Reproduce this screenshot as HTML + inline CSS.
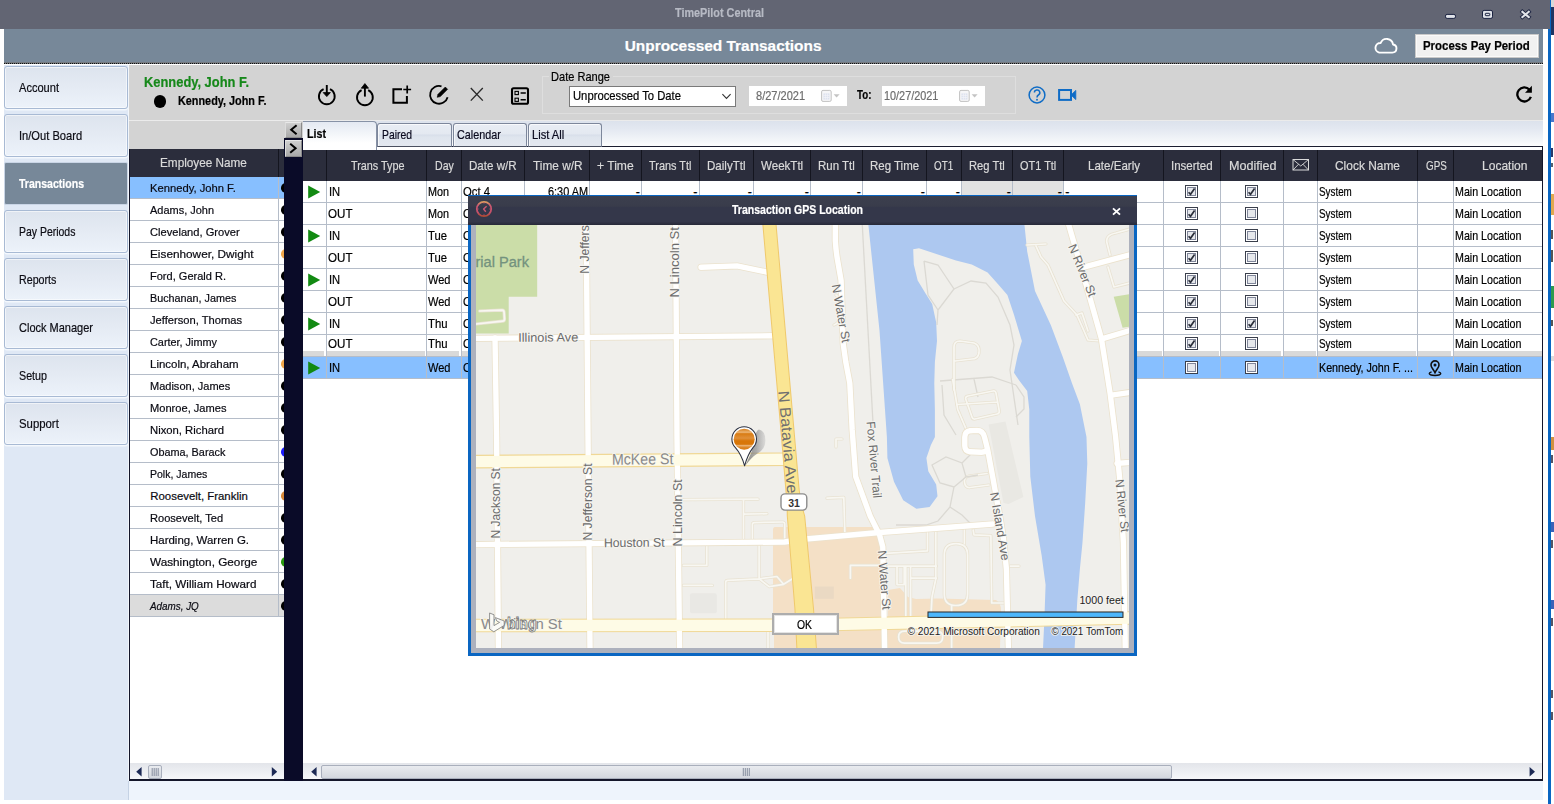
<!DOCTYPE html>
<html lang="en"><head><meta charset="utf-8"><title>TimePilot Central</title>
<style>
html,body{margin:0;padding:0;}
body{width:1554px;height:804px;overflow:hidden;background:#fff;position:relative;font-family:"Liberation Sans",sans-serif;}
.a{position:absolute;}
.t{position:absolute;white-space:pre;line-height:1;transform-origin:0 0;-webkit-text-stroke:.2px;font-family:"Liberation Sans",sans-serif;}
#titlebar{left:0;top:0;width:1550px;height:28.5px;background:#626573;}
#subhdr{left:4px;top:28.5px;width:1539px;height:34.5px;background:#778899;}
#subline{left:4px;top:62px;width:1539px;height:1.4px;background:#767b80;border-bottom:1.3px dotted #111;}
#sidebar{left:4px;top:65px;width:125px;height:735px;background:#dfe8f5;border-right:1px solid #f2f6fb;box-sizing:border-box}
.nav{position:absolute;left:4.3px;width:123.6px;height:43.6px;box-sizing:border-box;border:1px solid #a8bad4;border-radius:3px;
  background:linear-gradient(#dde4ee 0%,#e4eaf3 45%,#ecf2fa 100%);box-shadow:inset 0 0 0 1px rgba(255,255,255,.55), 0 1.5px 0 #f4f8fd;}
.nav.sel{background:#778899;border-color:#c9d5e6;box-shadow:none;border-radius:2px;}
#toolbar{left:128.5px;top:65px;width:1414.5px;height:55px;background:#d3d3d3;}
#tbline{left:128.5px;top:119.6px;width:1414.5px;height:1.4px;background:#ebebeb;}
#strip{left:128.5px;top:121px;width:175px;height:28.5px;background:#d3d3d3;}
#bottom{left:128px;top:781px;width:1415px;height:19px;background:#eef4fc;border-left:1px solid #c5d2e4;box-sizing:border-box;}

#emp{left:128.5px;top:149px;width:156px;height:632px;background:#fff;border-left:1.5px solid #14162a;border-bottom:2px solid #14162a;box-sizing:border-box;overflow:hidden;}
#emphdr{left:130px;top:149px;width:154.5px;height:28px;background:#2b2d3c;}
.erow{position:absolute;left:130px;width:154.5px;height:22px;box-sizing:border-box;border-bottom:1px solid #b5bdc9;background:#fff;}
.dot{position:absolute;left:281px;width:9.6px;height:9.6px;border-radius:50%;}
#split{left:284.3px;top:138px;width:18.6px;height:643px;background:#0a0b28;}
.sbtn{position:absolute;left:285.3px;width:16.6px;height:16.4px;box-sizing:border-box;background:linear-gradient(#cfcfcf,#a9a9a9);border:1px solid #8a8a8a;border-top-color:#e8e8e8;border-left-color:#dcdcdc;}
#tabstrip{left:303px;top:121px;width:1240px;height:26px;background:linear-gradient(#dce2ec 0%,#e3e8f1 30%,#f1f4f8 70%,#fff 100%);}
.tab{position:absolute;top:123.2px;height:24px;width:74.4px;box-sizing:border-box;border:1px solid #7d879b;border-bottom:1px solid #4a5060;border-radius:3px 3px 0 0;
  background:linear-gradient(#e9edf4 0%,#e4e9f1 45%,#d8dfea 50%,#dfe5ee 60%,#e3e8f0 100%);box-shadow:inset 1px 1px 0 rgba(255,255,255,.7);}
#tabactive{left:303px;top:121.2px;width:73.6px;height:29px;box-sizing:border-box;border:1px solid #8792a6;border-bottom:none;border-left:none;border-radius:0 4px 0 0;
  background:linear-gradient(#e4e9f2 0%,#f2f5f9 40%,#fff 75%);}
#grid{left:303px;top:146px;width:1240px;height:635px;background:#fff;box-sizing:border-box;border-top:1px solid #1c1e30;border-right:1.2px solid #14162a;border-bottom:2px solid #14162a;}
#ghdr{left:303px;top:150.3px;width:1239.3px;height:30.7px;background:#2b2d3c;}
.hsep{position:absolute;top:150.3px;width:1px;height:30.7px;background:#14151f;}
.vl{position:absolute;width:1px;background:#b5bdc9;}
.hl{position:absolute;left:303px;width:1239px;height:1px;background:#b5bdc9;}
.sb{position:absolute;height:16px;top:763px;background:linear-gradient(#e3e5ea 0%,#eceef2 50%,#f6f7f9 100%);}
.thumb{position:absolute;box-sizing:border-box;border:1px solid #a9afbc;border-radius:2px;background:linear-gradient(#e9ebef,#d3d7de);}
.cb{position:absolute;width:13px;height:13px;box-sizing:border-box;border:1.2px solid #3a3f4c;background:#fff;box-shadow:inset 0 0 0 1px #fff, inset 0 0 0 2px #80869a;}
.cbi{position:absolute;left:1.9px;top:1.9px;width:6.8px;height:6.8px;background:#e6e8ec;}

#dlg,#dlgin,#dlgtitle,#map,#okbtn,.dz{z-index:5;}

#dlg{left:468.2px;top:195px;width:668.8px;height:461px;background:#0a66c2;}
#dlgin{left:471px;top:225px;width:663.2px;height:427.8px;background:#adb1bd;}
#dlgtitle{left:468.2px;top:196px;width:668.8px;height:29px;background:linear-gradient(#3c3f4e 0%,#393c4b 35%,#34374a 40%,#34374a 88%,#272938 100%);}
#map{left:476px;top:225.4px;width:653.2px;height:422.8px;overflow:hidden;background:#f0efeb;}
#okbtn{left:772.2px;top:613.4px;width:66.8px;height:22px;box-sizing:border-box;background:#fff;border:2px solid #adadad;box-shadow:inset 0 0 0 1px #e4e4e4;}
.ml{font-family:"Liberation Sans",sans-serif;}
</style></head>
<body>
<div class="a" id="titlebar"></div>
<div class="a" id="subhdr"></div>
<div class="a" id="subline"></div>
<div class="a" style="left:1548px;top:28.5px;width:3px;height:775.5px;background:#0a66c2"></div>
<div class="a" style="left:1550px;top:0;width:1px;height:29px;background:#0a66c2"></div>
<div class="a" style="left:1551px;top:0;width:3px;height:7px;background:#d8d8d8"></div>
<div class="a" style="left:1551px;top:7px;width:3px;height:28px;background:#1f3563"></div>
<div class="a" style="left:1551px;top:113px;width:3px;height:9px;background:#4a78cc"></div>
<div class="a" style="left:1551px;top:148px;width:2px;height:9px;background:#2a3a6a"></div>
<div class="a" style="left:1551px;top:163px;width:2px;height:4px;background:#55606e"></div>
<div class="a" style="left:1551px;top:194px;width:3px;height:21px;background:#e0a850"></div>
<div class="a" style="left:1551px;top:230px;width:2px;height:9px;background:#555"></div>
<div class="a" style="left:1551px;top:250px;width:2px;height:12px;background:#555"></div>
<div class="a" style="left:1551px;top:286px;width:3px;height:22px;background:#2e9a4e"></div>
<div class="a" style="left:1551px;top:320px;width:2px;height:6px;background:#555"></div>
<div class="a" style="left:1551px;top:356px;width:3px;height:5px;background:#dcdcdc"></div>
<div class="a" style="left:1551px;top:437px;width:3px;height:13px;background:#d09040"></div>
<div class="a" style="left:1551px;top:455px;width:2px;height:8px;background:#556"></div>
<div class="a" style="left:1551px;top:522px;width:3px;height:10px;background:#3a62b8"></div>
<div class="a" style="left:1551px;top:540px;width:2px;height:8px;background:#556"></div>
<div class="a" style="left:1551px;top:600px;width:3px;height:9px;background:#3a62b8"></div>
<div class="a" style="left:1551px;top:618px;width:2px;height:8px;background:#556"></div>
<div class="a" style="left:1551px;top:690px;width:2px;height:8px;background:#556"></div>
<div class="a" style="left:1551px;top:712px;width:2px;height:8px;background:#556"></div>
<svg class="a" style="left:1440px;top:6px" width="100" height="18" viewBox="1440 6 100 18">
<rect x="1445.5" y="14.4" width="10" height="4" rx="1.6" fill="#e0e3e9" stroke="#1a2240" stroke-width="1"/>
<rect x="1482.5" y="10.4" width="10" height="8" rx="1.6" fill="#e0e3e9" stroke="#1a2240" stroke-width="1"/>
<rect x="1485.3" y="13.3" width="4.5" height="2.4" rx=".6" fill="#e0e3e9" stroke="#1a2240" stroke-width="1"/>
<path d="M1522.4 11.8 L1528.8 17.1 M1528.8 11.8 L1522.4 17.1" stroke="#1a2240" stroke-width="3.8" stroke-linecap="square"/>
<path d="M1522.4 11.8 L1528.8 17.1 M1528.8 11.8 L1522.4 17.1" stroke="#e0e3e9" stroke-width="2.1" stroke-linecap="square"/>
</svg>
<svg class="a" style="left:1370px;top:34px" width="32" height="24" viewBox="1370 34 32 24">
<path d="M1379.2 52.6 h13.2 a4.1 4.1 0 0 0 .6 -8.15 a6.4 6.4 0 0 0 -12.3 -1.5 a4.9 4.9 0 0 0 -1.5 9.65 z" fill="none" stroke="#fff" stroke-width="1.9" stroke-linejoin="round"/>
</svg>
<div class="a" style="left:1415px;top:34.2px;width:123.7px;height:23.4px;box-sizing:border-box;background:#f1f1f1;border:1.5px solid #c9c9c9;box-shadow:inset 0 0 0 1px #fafafa"></div>
<div class="a" id="sidebar"></div>
<div class="nav" style="top:65.5px"></div>
<div class="nav" style="top:113.5px"></div>
<div class="nav sel" style="top:161.5px"></div>
<div class="nav" style="top:209.5px"></div>
<div class="nav" style="top:257.5px"></div>
<div class="nav" style="top:305.5px"></div>
<div class="nav" style="top:353.5px"></div>
<div class="nav" style="top:401.5px"></div>
<div class="a" id="toolbar"></div>
<div class="a" id="tbline"></div>
<div class="a" id="strip"></div>
<div class="a" id="bottom"></div>
<div class="a" style="left:153.6px;top:95.3px;width:12.4px;height:12.4px;border-radius:50%;background:#000"></div>
<svg class="a" style="left:310px;top:78px" width="230" height="34" viewBox="310 78 230 34">
<g fill="none" stroke="#000" stroke-width="1.9" stroke-linecap="butt">
 <!-- clock in -->
 <path d="M323.6 89.2 A7.9 7.9 0 1 0 330.0 89.2"/>
 <path d="M326.8 85 V95"/>
 <path d="M323.2 92.6 L326.8 96.6 L330.4 92.6 Z" fill="#000" stroke-width=".8"/>
 <!-- clock out -->
 <path d="M361.6 90.2 A7.9 7.9 0 1 0 368.2 90.2"/>
 <path d="M364.9 86 V96.6"/>
 <path d="M361.3 88.2 L364.9 83.6 L368.5 88.2 Z" fill="#000" stroke-width=".8"/>
 <!-- new -->
 <path d="M402 89.2 H393.4 V102.7 H406.9 V96" stroke-width="2"/>
 <path d="M407.2 85.6 V93.4 M403.3 89.5 H411.1" stroke-width="1.7"/>
 <!-- edit circle -->
 <path d="M441.5 86.3 A8.9 8.9 0 1 0 447.6 97.2" stroke-width="1.8"/>
 <path d="M437.2 97.3 L438 94.3 L445.3 87 L447.6 89.3 L440.3 96.6 Z" fill="#000" stroke-width=".6"/>
 <!-- delete X -->
 <path d="M470.8 88 L482.8 100.6 M482.8 88 L470.8 100.6" stroke="#2a2a2a" stroke-width="1.35"/>
 <!-- list -->
 <rect x="512" y="88.2" width="16" height="15.6" rx="1.6" stroke-width="2.1"/>
 <rect x="515" y="91.4" width="3.4" height="3.2" stroke-width="1.1"/>
 <rect x="515" y="98.2" width="3.4" height="3.2" stroke-width="1.1"/>
 <path d="M520.6 92.9 H525.8 M520.6 99.8 H525.8" stroke-width="1.5"/>
</g></svg>
<div class="a" style="left:542.2px;top:76.4px;width:473.5px;height:38px;box-sizing:border-box;border:1px solid #dedede"></div>
<div class="a" style="left:549px;top:72px;width:64px;height:10px;background:#d3d3d3"></div>
<div class="a" style="left:569px;top:86.2px;width:166.7px;height:20.6px;box-sizing:border-box;background:#fff;border:1px solid #7a7a7a"></div>
<svg class="a" style="left:720px;top:90px" width="14" height="12" viewBox="720 90 14 12"><path d="M722.4 94.2 L726.5 98.4 L730.6 94.2" fill="none" stroke="#333" stroke-width="1.1"/></svg>
<div class="a" style="left:748.8px;top:85.8px;width:98.2px;height:20.2px;background:#fff"></div>
<div class="a" style="left:881.8px;top:85.8px;width:103.2px;height:20.2px;background:#fff"></div>
<svg class="a" style="left:820px;top:88px" width="24" height="16" viewBox="-1 0 24 16">
<rect x=".6" y="2.4" width="9.6" height="11" rx="1.4" fill="#f6f6f8" stroke="#c2c2c2"/>
<rect x="2.4" y="5.4" width="6" height="6.2" fill="#dde2ee"/><path d="M2.4 7.4h6M2.4 9.5h6M4.4 5.4v6.2M6.4 5.4v6.2" stroke="#f4f5f9" stroke-width=".7"/>
<path d="M12.6 6.2 h6 l-3 3.4 z" fill="#c4c4c4"/>
</svg>
<svg class="a" style="left:958.2px;top:88px" width="24" height="16" viewBox="-1 0 24 16">
<rect x=".6" y="2.4" width="9.6" height="11" rx="1.4" fill="#f6f6f8" stroke="#c2c2c2"/>
<rect x="2.4" y="5.4" width="6" height="6.2" fill="#dde2ee"/><path d="M2.4 7.4h6M2.4 9.5h6M4.4 5.4v6.2M6.4 5.4v6.2" stroke="#f4f5f9" stroke-width=".7"/>
<path d="M12.6 6.2 h6 l-3 3.4 z" fill="#c4c4c4"/>
</svg>
<svg class="a" style="left:1026px;top:84px" width="54" height="22" viewBox="1026 84 54 22">
<circle cx="1037" cy="95" r="7.9" fill="none" stroke="#0f6cc6" stroke-width="1.5"/>
<path d="M1034.4 92.6 a2.7 2.7 0 1 1 4 2.4 c-1.1 .7 -1.4 1.1 -1.4 2.4" fill="none" stroke="#0f6cc6" stroke-width="1.5"/>
<circle cx="1037" cy="99.7" r=".95" fill="#0f6cc6"/>
<rect x="1059.1" y="90" width="11.9" height="9.9" fill="none" stroke="#0f6cc6" stroke-width="2"/>
<path d="M1071 95 L1075.8 90.4 V99.6 Z" fill="#0f6cc6" stroke="#0f6cc6" stroke-width=".8"/>
</svg>
<svg class="a" style="left:1512px;top:82px" width="24" height="24" viewBox="1512 82 24 24">
<path d="M1529.4 89.6 A7 7 0 1 0 1530.9 96.9" fill="none" stroke="#000" stroke-width="2.3"/>
<path d="M1531.9 85.8 V92.8 H1525 Z" fill="#000"/>
</svg>
<div class="a" id="emp"></div>
<div class="erow" style="top:177px;background:#87bfff"></div>
<div class="dot" style="top:183.2px;background:#000"></div>
<div class="erow" style="top:199px;background:#fff"></div>
<div class="dot" style="top:205.2px;background:#000"></div>
<div class="erow" style="top:221px;background:#fff"></div>
<div class="dot" style="top:227.2px;background:#000"></div>
<div class="erow" style="top:243px;background:#fff"></div>
<div class="dot" style="top:249.2px;background:#f0a64a"></div>
<div class="erow" style="top:265px;background:#fff"></div>
<div class="dot" style="top:271.2px;background:#000"></div>
<div class="erow" style="top:287px;background:#fff"></div>
<div class="dot" style="top:293.2px;background:#000"></div>
<div class="erow" style="top:309px;background:#fff"></div>
<div class="dot" style="top:315.2px;background:#000"></div>
<div class="erow" style="top:331px;background:#fff"></div>
<div class="dot" style="top:337.2px;background:#000"></div>
<div class="erow" style="top:353px;background:#fff"></div>
<div class="dot" style="top:359.2px;background:#f0a64a"></div>
<div class="erow" style="top:375px;background:#fff"></div>
<div class="dot" style="top:381.2px;background:#000"></div>
<div class="erow" style="top:397px;background:#fff"></div>
<div class="dot" style="top:403.2px;background:#000"></div>
<div class="erow" style="top:419px;background:#fff"></div>
<div class="dot" style="top:425.2px;background:#000"></div>
<div class="erow" style="top:441px;background:#fff"></div>
<div class="dot" style="top:447.2px;background:#1a1aff"></div>
<div class="erow" style="top:463px;background:#fff"></div>
<div class="dot" style="top:469.2px;background:#000"></div>
<div class="erow" style="top:485px;background:#fff"></div>
<div class="dot" style="top:491.2px;background:#d98a3a"></div>
<div class="erow" style="top:507px;background:#fff"></div>
<div class="dot" style="top:513.2px;background:#000"></div>
<div class="erow" style="top:529px;background:#fff"></div>
<div class="dot" style="top:535.2px;background:#000"></div>
<div class="erow" style="top:551px;background:#fff"></div>
<div class="dot" style="top:557.2px;background:#2a9a10"></div>
<div class="erow" style="top:573px;background:#fff"></div>
<div class="dot" style="top:579.2px;background:#000"></div>
<div class="erow" style="top:595px;background:#dcdcdc"></div>
<div class="dot" style="top:601.2px;background:#000"></div>
<div class="a" style="left:277.6px;top:177px;width:1px;height:440px;background:#b5bdc9"></div>
<div class="a" id="emphdr"></div>
<div class="a" style="left:277.6px;top:149px;width:1px;height:28px;background:#14151f"></div>
<div class="sb" style="left:130px;width:154.5px"></div>
<div class="thumb" style="left:148.4px;top:764.6px;width:13.4px;height:14px"></div>
<svg class="a" style="left:130px;top:763px" width="155" height="17" viewBox="130 763 155 17">
<path d="M141.6 767 V776.4 L136.2 771.7 Z M271.8 767 V776.4 L277.2 771.7 Z" fill="#1d2a55"/>
<path d="M152.2 768 V776 M154.2 768 V776 M156.2 768 V776 M158.2 768 V776" stroke="#7d8698" stroke-width=".9"/></svg>
<div class="a" id="split"></div>
<div class="sbtn" style="top:121.6px"></div><div class="sbtn" style="top:140.3px"></div>
<svg class="a" style="left:285px;top:121px" width="18" height="37" viewBox="285 121 18 37">
<path d="M296.6 125.2 L291.2 129.7 L296.6 134.2" fill="none" stroke="#000" stroke-width="2"/>
<path d="M290.2 143.8 L295.6 148.3 L290.2 152.8" fill="none" stroke="#000" stroke-width="2"/></svg>
<div class="a" id="tabstrip"></div>
<div class="a" id="grid"></div>
<div class="tab" style="left:377.4px"></div>
<div class="tab" style="left:452.9px"></div>
<div class="tab" style="left:527.9px"></div>
<div class="a" id="tabactive"></div>
<div class="hl" style="top:202px"></div>
<svg class="a" style="left:307px;top:183.9px" width="15" height="16" viewBox="0 0 15 16"><path d="M1.2 1.4 L13.2 8 L1.2 14.6 Z" fill="#128a12"/></svg>
<div class="cb" style="left:1185.0px;top:185.0px"><div class="cbi"></div><svg style="position:absolute;left:1px;top:1px" width="9" height="9" viewBox="0 0 9 9"><path d="M1.6 5.2 L3.5 7.3 L7.6 1.6" fill="none" stroke="#2a2e3a" stroke-width="1.7"/></svg></div>
<div class="cb" style="left:1245.1px;top:185.0px"><div class="cbi"></div><svg style="position:absolute;left:1px;top:1px" width="9" height="9" viewBox="0 0 9 9"><path d="M1.6 5.2 L3.5 7.3 L7.6 1.6" fill="none" stroke="#2a2e3a" stroke-width="1.7"/></svg></div>
<div class="hl" style="top:224px"></div>
<div class="cb" style="left:1185.0px;top:207.0px"><div class="cbi"></div><svg style="position:absolute;left:1px;top:1px" width="9" height="9" viewBox="0 0 9 9"><path d="M1.6 5.2 L3.5 7.3 L7.6 1.6" fill="none" stroke="#2a2e3a" stroke-width="1.7"/></svg></div>
<div class="cb" style="left:1245.1px;top:207.0px"><div class="cbi"></div></div>
<div class="hl" style="top:246px"></div>
<svg class="a" style="left:307px;top:227.9px" width="15" height="16" viewBox="0 0 15 16"><path d="M1.2 1.4 L13.2 8 L1.2 14.6 Z" fill="#128a12"/></svg>
<div class="cb" style="left:1185.0px;top:229.0px"><div class="cbi"></div><svg style="position:absolute;left:1px;top:1px" width="9" height="9" viewBox="0 0 9 9"><path d="M1.6 5.2 L3.5 7.3 L7.6 1.6" fill="none" stroke="#2a2e3a" stroke-width="1.7"/></svg></div>
<div class="cb" style="left:1245.1px;top:229.0px"><div class="cbi"></div></div>
<div class="hl" style="top:268px"></div>
<div class="cb" style="left:1185.0px;top:251.0px"><div class="cbi"></div><svg style="position:absolute;left:1px;top:1px" width="9" height="9" viewBox="0 0 9 9"><path d="M1.6 5.2 L3.5 7.3 L7.6 1.6" fill="none" stroke="#2a2e3a" stroke-width="1.7"/></svg></div>
<div class="cb" style="left:1245.1px;top:251.0px"><div class="cbi"></div></div>
<div class="hl" style="top:290px"></div>
<svg class="a" style="left:307px;top:271.9px" width="15" height="16" viewBox="0 0 15 16"><path d="M1.2 1.4 L13.2 8 L1.2 14.6 Z" fill="#128a12"/></svg>
<div class="cb" style="left:1185.0px;top:273.0px"><div class="cbi"></div><svg style="position:absolute;left:1px;top:1px" width="9" height="9" viewBox="0 0 9 9"><path d="M1.6 5.2 L3.5 7.3 L7.6 1.6" fill="none" stroke="#2a2e3a" stroke-width="1.7"/></svg></div>
<div class="cb" style="left:1245.1px;top:273.0px"><div class="cbi"></div></div>
<div class="hl" style="top:312px"></div>
<div class="cb" style="left:1185.0px;top:295.0px"><div class="cbi"></div><svg style="position:absolute;left:1px;top:1px" width="9" height="9" viewBox="0 0 9 9"><path d="M1.6 5.2 L3.5 7.3 L7.6 1.6" fill="none" stroke="#2a2e3a" stroke-width="1.7"/></svg></div>
<div class="cb" style="left:1245.1px;top:295.0px"><div class="cbi"></div></div>
<div class="hl" style="top:334px"></div>
<svg class="a" style="left:307px;top:315.9px" width="15" height="16" viewBox="0 0 15 16"><path d="M1.2 1.4 L13.2 8 L1.2 14.6 Z" fill="#128a12"/></svg>
<div class="cb" style="left:1185.0px;top:317.0px"><div class="cbi"></div><svg style="position:absolute;left:1px;top:1px" width="9" height="9" viewBox="0 0 9 9"><path d="M1.6 5.2 L3.5 7.3 L7.6 1.6" fill="none" stroke="#2a2e3a" stroke-width="1.7"/></svg></div>
<div class="cb" style="left:1245.1px;top:317.0px"><div class="cbi"></div><svg style="position:absolute;left:1px;top:1px" width="9" height="9" viewBox="0 0 9 9"><path d="M1.6 5.2 L3.5 7.3 L7.6 1.6" fill="none" stroke="#2a2e3a" stroke-width="1.7"/></svg></div>
<div class="a" style="left:303px;top:351px;width:1239.3px;height:5.4px;background:#d9d9d9"></div>
<div class="hl" style="top:356px"></div>
<div class="cb" style="left:1185.0px;top:337.0px"><div class="cbi"></div><svg style="position:absolute;left:1px;top:1px" width="9" height="9" viewBox="0 0 9 9"><path d="M1.6 5.2 L3.5 7.3 L7.6 1.6" fill="none" stroke="#2a2e3a" stroke-width="1.7"/></svg></div>
<div class="cb" style="left:1245.1px;top:337.0px"><div class="cbi"></div></div>
<div class="a" style="left:303px;top:356.8px;width:1239.3px;height:21.2px;background:#87bfff"></div>
<div class="hl" style="top:378px"></div>
<svg class="a" style="left:307px;top:359.9px" width="15" height="16" viewBox="0 0 15 16"><path d="M1.2 1.4 L13.2 8 L1.2 14.6 Z" fill="#128a12"/></svg>
<div class="cb" style="left:1185.0px;top:361.0px"><div class="cbi"></div></div>
<div class="cb" style="left:1245.1px;top:361.0px"><div class="cbi"></div></div>
<div class="a" style="left:962px;top:181px;width:101.6px;height:21.5px;background:#e2e2e2"></div>
<div class="a" style="left:324.3px;top:351px;width:1.5px;height:5.4px;background:#fff"></div>
<div class="vl" style="left:325.8px;top:181px;height:197.5px"></div>
<div class="a" style="left:424.5px;top:351px;width:1.5px;height:5.4px;background:#fff"></div>
<div class="vl" style="left:426.0px;top:181px;height:197.5px"></div>
<div class="a" style="left:459.4px;top:351px;width:1.5px;height:5.4px;background:#fff"></div>
<div class="vl" style="left:460.9px;top:181px;height:197.5px"></div>
<div class="a" style="left:522.6px;top:351px;width:1.5px;height:5.4px;background:#fff"></div>
<div class="vl" style="left:524.1px;top:181px;height:197.5px"></div>
<div class="a" style="left:587.6px;top:351px;width:1.5px;height:5.4px;background:#fff"></div>
<div class="vl" style="left:589.1px;top:181px;height:197.5px"></div>
<div class="a" style="left:639.4px;top:351px;width:1.5px;height:5.4px;background:#fff"></div>
<div class="vl" style="left:640.9px;top:181px;height:197.5px"></div>
<div class="a" style="left:697.0px;top:351px;width:1.5px;height:5.4px;background:#fff"></div>
<div class="vl" style="left:698.5px;top:181px;height:197.5px"></div>
<div class="a" style="left:751.4px;top:351px;width:1.5px;height:5.4px;background:#fff"></div>
<div class="vl" style="left:752.9px;top:181px;height:197.5px"></div>
<div class="a" style="left:808.6px;top:351px;width:1.5px;height:5.4px;background:#fff"></div>
<div class="vl" style="left:810.1px;top:181px;height:197.5px"></div>
<div class="a" style="left:860.5px;top:351px;width:1.5px;height:5.4px;background:#fff"></div>
<div class="vl" style="left:862.0px;top:181px;height:197.5px"></div>
<div class="a" style="left:924.7px;top:351px;width:1.5px;height:5.4px;background:#fff"></div>
<div class="vl" style="left:926.2px;top:181px;height:197.5px"></div>
<div class="a" style="left:959.5px;top:351px;width:1.5px;height:5.4px;background:#fff"></div>
<div class="vl" style="left:961.0px;top:181px;height:197.5px"></div>
<div class="a" style="left:1010.8px;top:351px;width:1.5px;height:5.4px;background:#fff"></div>
<div class="vl" style="left:1012.3px;top:181px;height:197.5px"></div>
<div class="a" style="left:1061.6px;top:351px;width:1.5px;height:5.4px;background:#fff"></div>
<div class="vl" style="left:1063.1px;top:181px;height:197.5px"></div>
<div class="a" style="left:1161.6px;top:351px;width:1.5px;height:5.4px;background:#fff"></div>
<div class="vl" style="left:1163.1px;top:181px;height:197.5px"></div>
<div class="a" style="left:1218.5px;top:351px;width:1.5px;height:5.4px;background:#fff"></div>
<div class="vl" style="left:1220.0px;top:181px;height:197.5px"></div>
<div class="a" style="left:1281.4px;top:351px;width:1.5px;height:5.4px;background:#fff"></div>
<div class="vl" style="left:1282.9px;top:181px;height:197.5px"></div>
<div class="a" style="left:1315.7px;top:351px;width:1.5px;height:5.4px;background:#fff"></div>
<div class="vl" style="left:1317.2px;top:181px;height:197.5px"></div>
<div class="a" style="left:1415.5px;top:351px;width:1.5px;height:5.4px;background:#fff"></div>
<div class="vl" style="left:1417.0px;top:181px;height:197.5px"></div>
<div class="a" style="left:1451.4px;top:351px;width:1.5px;height:5.4px;background:#fff"></div>
<div class="vl" style="left:1452.9px;top:181px;height:197.5px"></div>
<div class="a" id="ghdr"></div>
<div class="hsep" style="left:325.8px"></div>
<div class="hsep" style="left:426.0px"></div>
<div class="hsep" style="left:460.9px"></div>
<div class="hsep" style="left:524.1px"></div>
<div class="hsep" style="left:589.1px"></div>
<div class="hsep" style="left:640.9px"></div>
<div class="hsep" style="left:698.5px"></div>
<div class="hsep" style="left:752.9px"></div>
<div class="hsep" style="left:810.1px"></div>
<div class="hsep" style="left:862.0px"></div>
<div class="hsep" style="left:926.2px"></div>
<div class="hsep" style="left:961.0px"></div>
<div class="hsep" style="left:1012.3px"></div>
<div class="hsep" style="left:1063.1px"></div>
<div class="hsep" style="left:1163.1px"></div>
<div class="hsep" style="left:1220.0px"></div>
<div class="hsep" style="left:1282.9px"></div>
<div class="hsep" style="left:1317.2px"></div>
<div class="hsep" style="left:1417.0px"></div>
<div class="hsep" style="left:1452.9px"></div>
<svg class="a" style="left:1292px;top:158px" width="18" height="14" viewBox="0 0 18 14"><rect x="1" y="1.5" width="15.5" height="10.5" fill="none" stroke="#dadada" stroke-width="1"/><path d="M1 1.5 L8.75 8 L16.5 1.5 M1 12 L6.6 6.2 M16.5 12 L10.9 6.2" fill="none" stroke="#dadada" stroke-width=".9"/></svg>
<svg class="a" style="left:1427px;top:359px" width="16" height="18" viewBox="0 0 16 18"><path d="M8 1.9 a4 4 0 0 1 4 4 c0 2.6 -2.4 4.4 -4 7.8 c-1.6 -3.4 -4 -5.2 -4 -7.8 a4 4 0 0 1 4 -4 z" fill="none" stroke="#111" stroke-width="1.6"/><circle cx="8" cy="6" r="1.5" fill="#111"/><path d="M4.6 12.9 c-1.5 .4 -2.3 1 -2.3 1.7 c0 1 2.5 1.8 5.7 1.8 s5.7 -.8 5.7 -1.8 c0 -.7 -.8 -1.3 -2.3 -1.7" fill="none" stroke="#111" stroke-width="1.5"/></svg>
<div class="sb" style="left:303px;width:1239px"></div>
<div class="thumb" style="left:321px;top:764.6px;width:850.6px;height:14px"></div>
<svg class="a" style="left:303px;top:763px" width="1240" height="17" viewBox="303 763 1240 17">
<path d="M316.6 767 V776.4 L311.2 771.7 Z M1529.6 767 V776.4 L1535 771.7 Z" fill="#1d2a55"/>
<path d="M743.3 768 V776 M745.3 768 V776 M747.3 768 V776 M749.3 768 V776" stroke="#7d8698" stroke-width=".9"/></svg>
<div class="a" id="dlg"></div>
<div class="a" id="dlgin"></div>
<div class="a" id="dlgtitle"></div>
<svg class="a dz" style="left:474px;top:199px" width="20" height="20" viewBox="474 199 20 20">
<defs><linearGradient id="ig" x1="0" y1="0" x2="0" y2="1"><stop offset="0" stop-color="#e0a060"/><stop offset=".25" stop-color="#cc5872"/><stop offset=".75" stop-color="#c4506a"/><stop offset="1" stop-color="#b04a30"/></linearGradient></defs>
<circle cx="484" cy="209" r="7.2" fill="none" stroke="url(#ig)" stroke-width="1.8"/>
<path d="M486.6 206.2 L483.6 209 L485.8 211.8" fill="none" stroke="#cc5872" stroke-width="1.4" stroke-linejoin="round"/>
<path d="M484 202.6v1M484 214.4v1M477.6 209h1M489.4 209h1" stroke="#c4506a" stroke-width="1"/></svg>
<svg class="a dz" style="left:1110px;top:205px" width="14" height="12" viewBox="1110 205 14 12">
<path d="M1113 208.4 L1120 214.6 M1120 208.4 L1113 214.6" stroke="#fff" stroke-width="1.9"/></svg>
<svg class="a" id="map" width="653.2" height="422.8" viewBox="0 0 653.2 422.8">
<rect width="654" height="424" fill="#f0efeb"/>
<path d="M299 302 H397 L405 312 L408 395 H297 V305 Q297 302 299 302 Z" fill="#f4e0c6"/>
<path d="M298 395 H520 V424 H298 Z" fill="#f4e0c6"/>
<path d="M412 365 L424 363 L432 372 L440 374 L462 373.5 L520 375 Q525 378 525 385 L524 424 H412 Z" fill="#f4e0c6"/>
<path d="M512.6 199.4 L529.5 196.4 L547.4 272 L532.5 279 L527.5 278 Z" fill="#e9e8e3"/>
<rect x="214" y="368.2" width="26.8" height="20" rx="2" fill="#e9e8e4"/>
<rect x="338.8" y="361.5" width="19" height="12.3" fill="#ead9c3"/>
<path d="M0 0 H61.2 V71.7 H32.7 V108.6 H0 Z" fill="#cbdda8"/>
<path d="M637.7 71.7 L654 69.1 V101.5 L646.6 102.8 Z" fill="#cbdda8"/>
<path d="M392.4 0 L403.5 105.5 L410.9 212 L411.4 233.1 L418 256.8 L427.2 275.3 L440.4 283.7 L453.6 281.9 L461.5 271.3 L460.2 259.5 L452.3 246.3 L450.4 233.1 L454.9 219.9 L458.9 212 L458.9 184.6 L458.3 158.2 L458.9 137.1 L461 116 L460.2 97.6 L456.2 79.1 L449.6 68.6 L441.7 55.4 L437.8 39.6 L437.2 24.3 L443 23.2 L458.9 28.5 L480 35.6 L495.8 39.6 L511.6 47.5 L522.1 59.3 L531.4 69.9 L538 89.7 L545.9 116 L541.9 129.2 L538 147.7 L543.2 155.6 L551.2 166.1 L553.3 184.6 L553.3 212 L554.3 251.6 L559 291.1 L565.7 330.7 L569.6 359.7 L568.3 396.6 L567 424 L598.6 424 L601.3 375.5 L603.9 343.9 L606.5 317.5 L609.2 277.9 L611.3 238.4 L610.5 212 L603.9 179.3 L596 158.2 L586.8 131.9 L574.9 100.2 L559 65.9 L551.2 26.4 L548.5 0 Z" fill="#adc8f0"/>
<path d="M397.7 211 L386.3 0" fill="none" stroke="#dbd9d3" stroke-width="1.3"/>
<path d="M448 36 L452 70 L462 85 M448 36 L462 40 L470 52 L478 64 L462 85 L461 100" fill="none" stroke="#dbd9d3" stroke-width="1.3"/>
<path d="M478 64 L495 56 L510 58 L522 72 L534 100 L538 120 L534 145 L542 200" fill="none" stroke="#dbd9d3" stroke-width="1.3"/>
<path d="M464 156 L490 154 L516 152 L540 160 M498 154 L502 172" fill="none" stroke="#dbd9d3" stroke-width="1.3"/>
<path d="M466 160 L468 190 L480 210 M540 160 L548 172 L548 184 L540 192" fill="none" stroke="#dbd9d3" stroke-width="1.3"/>
<path d="M3.7 86 L26 85.2 Q28 85.3 28.1 87.5 L28.5 94 Q28.5 96 26.5 96.2 L0 99" fill="none" stroke="#e8e2d2" stroke-width="3.2" stroke-linejoin="round" stroke-linecap="round"/>
<path d="M478 165 L478 122 Q478 116 484 116 L498 118 Q504 120 503 128 Q502 134 496 134 L479 136" fill="none" stroke="#e8e2d2" stroke-width="3.2" stroke-linejoin="round" stroke-linecap="round"/>
<path d="M476.7 154.6 L481.7 184.5 L490.7 205.3" fill="none" stroke="#e8e2d2" stroke-width="3.2" stroke-linejoin="round" stroke-linecap="round"/>
<path d="M489.7 174 Q489.3 171.5 492 171 L517 166 Q519.5 165.5 520 168 L523.3 186 Q523.6 188.4 521 189 L499 194 Q496.6 194.4 496 192 Z M481 179.5 L521.5 177" fill="none" stroke="#e8e2d2" stroke-width="3.2" stroke-linejoin="round" stroke-linecap="round"/>
<path d="M551 20 L570 19 M560 21 L565 32 L572 40 L588 76 L601 90 L612 115 L625 116" fill="none" stroke="#e8e2d2" stroke-width="3.2" stroke-linejoin="round" stroke-linecap="round"/>
<path d="M600 90 L606 88 L612 106" fill="none" stroke="#e8e2d2" stroke-width="3.2" stroke-linejoin="round" stroke-linecap="round"/>
<path d="M631 18 Q629 10 640 8 L654 4 M631 18 L634 30 M632 42 L638 62 L654 58" fill="none" stroke="#e8e2d2" stroke-width="3.2" stroke-linejoin="round" stroke-linecap="round"/>
<path d="M360 70 Q368 76 366 88 Q364 98 358 100" fill="none" stroke="#e8e2d2" stroke-width="3.2" stroke-linejoin="round" stroke-linecap="round"/>
<path d="M207.4 274.7 L282 274.2 M267.5 274.7 V313.7 M267.5 289.2 L290.9 288.7 M276.4 313.7 V299.6 Q276.4 297.6 278.4 297.6 L306.7 297 Q308.7 297 308.7 299 V313.7" fill="none" stroke="#e8e2d2" stroke-width="3.2" stroke-linejoin="round" stroke-linecap="round"/>
<path d="M207.4 340.4 H230.8 V320.3 M207.4 360.4 H236.3" fill="none" stroke="#e8e2d2" stroke-width="3.2" stroke-linejoin="round" stroke-linecap="round"/>
<path d="M283.1 320.3 V353.8 L293.1 361.6 L307.6 359.3 L316.5 353.8 M283.1 353.8 L300.9 351.5 L307.6 359.3 M249.7 393.9 V357.5 Q249.7 355.5 251.7 355.4 L283.1 353.8" fill="none" stroke="#e8e2d2" stroke-width="3.2" stroke-linejoin="round" stroke-linecap="round"/>
<path d="M292 405 V424" fill="none" stroke="#e8e2d2" stroke-width="3.2" stroke-linejoin="round" stroke-linecap="round"/>
<path d="M351 273.1 L367.8 272.4 L368.9 309.2 M360 222 V214 H366" fill="none" stroke="#e8e2d2" stroke-width="3.2" stroke-linejoin="round" stroke-linecap="round"/>
<path d="M374.4 353.2 V340.3 H403.3" fill="none" stroke="#e8e2d2" stroke-width="3.2" stroke-linejoin="round" stroke-linecap="round"/>
<path d="M409.7 328.3 L451.5 325.9 V306.6" fill="none" stroke="#e8e2d2" stroke-width="3.2" stroke-linejoin="round" stroke-linecap="round"/>
<path d="M459.8 305.8 V354 L456 372 L455 390" fill="none" stroke="#e8e2d2" stroke-width="3.2" stroke-linejoin="round" stroke-linecap="round"/>
<path d="M412 341.1 H460.3 M434.6 353.2 H460.3 M421 341.1 V359.6 H428.2 V341.1 M429.8 341.1 V391 M434.6 341.1 V391" fill="none" stroke="#e8e2d2" stroke-width="3.2" stroke-linejoin="round" stroke-linecap="round"/>
<path d="M488.4 303 V318.7 M479.9 318.7 Q468.3 318.7 468.3 330 V369 Q468.3 380.5 479.9 380.5 Q491.6 380.5 491.6 369 V330 Q491.6 318.7 479.9 318.7 Z M475.6 380.5 V424" fill="none" stroke="#e8e2d2" stroke-width="3.2" stroke-linejoin="round" stroke-linecap="round"/>
<path d="M497.2 305 L498 309.8 L514.9 310.7 L515.7 378 L529.3 378" fill="none" stroke="#e8e2d2" stroke-width="3.2" stroke-linejoin="round" stroke-linecap="round"/>
<path d="M534 341.1 H543" fill="none" stroke="#e8e2d2" stroke-width="3.2" stroke-linejoin="round" stroke-linecap="round"/>
<path d="M422.6 412 Q422.6 406.2 428.6 406.2 H460.7 Q466.7 406.2 466.7 412 Q466.7 418.2 460.7 418.2 H428.6 Q422.6 418.2 422.6 412 Z" fill="none" stroke="#e8e2d2" stroke-width="3.2" stroke-linejoin="round" stroke-linecap="round"/>
<path d="M511 248.5 L493 251 Q488 252 488.5 257 Q489 263 494 262.5 L513 260" fill="none" stroke="#e8e2d2" stroke-width="3.2" stroke-linejoin="round" stroke-linecap="round"/>
<path d="M3.7 86 L26 85.2 Q28 85.3 28.1 87.5 L28.5 94 Q28.5 96 26.5 96.2 L0 99" fill="none" stroke="#f8f7f2" stroke-width="1.7" stroke-linejoin="round" stroke-linecap="round"/>
<path d="M478 165 L478 122 Q478 116 484 116 L498 118 Q504 120 503 128 Q502 134 496 134 L479 136" fill="none" stroke="#f8f7f2" stroke-width="1.7" stroke-linejoin="round" stroke-linecap="round"/>
<path d="M476.7 154.6 L481.7 184.5 L490.7 205.3" fill="none" stroke="#f8f7f2" stroke-width="1.7" stroke-linejoin="round" stroke-linecap="round"/>
<path d="M489.7 174 Q489.3 171.5 492 171 L517 166 Q519.5 165.5 520 168 L523.3 186 Q523.6 188.4 521 189 L499 194 Q496.6 194.4 496 192 Z M481 179.5 L521.5 177" fill="none" stroke="#f8f7f2" stroke-width="1.7" stroke-linejoin="round" stroke-linecap="round"/>
<path d="M551 20 L570 19 M560 21 L565 32 L572 40 L588 76 L601 90 L612 115 L625 116" fill="none" stroke="#f8f7f2" stroke-width="1.7" stroke-linejoin="round" stroke-linecap="round"/>
<path d="M600 90 L606 88 L612 106" fill="none" stroke="#f8f7f2" stroke-width="1.7" stroke-linejoin="round" stroke-linecap="round"/>
<path d="M631 18 Q629 10 640 8 L654 4 M631 18 L634 30 M632 42 L638 62 L654 58" fill="none" stroke="#f8f7f2" stroke-width="1.7" stroke-linejoin="round" stroke-linecap="round"/>
<path d="M360 70 Q368 76 366 88 Q364 98 358 100" fill="none" stroke="#f8f7f2" stroke-width="1.7" stroke-linejoin="round" stroke-linecap="round"/>
<path d="M207.4 274.7 L282 274.2 M267.5 274.7 V313.7 M267.5 289.2 L290.9 288.7 M276.4 313.7 V299.6 Q276.4 297.6 278.4 297.6 L306.7 297 Q308.7 297 308.7 299 V313.7" fill="none" stroke="#f8f7f2" stroke-width="1.7" stroke-linejoin="round" stroke-linecap="round"/>
<path d="M207.4 340.4 H230.8 V320.3 M207.4 360.4 H236.3" fill="none" stroke="#f8f7f2" stroke-width="1.7" stroke-linejoin="round" stroke-linecap="round"/>
<path d="M283.1 320.3 V353.8 L293.1 361.6 L307.6 359.3 L316.5 353.8 M283.1 353.8 L300.9 351.5 L307.6 359.3 M249.7 393.9 V357.5 Q249.7 355.5 251.7 355.4 L283.1 353.8" fill="none" stroke="#f8f7f2" stroke-width="1.7" stroke-linejoin="round" stroke-linecap="round"/>
<path d="M292 405 V424" fill="none" stroke="#f8f7f2" stroke-width="1.7" stroke-linejoin="round" stroke-linecap="round"/>
<path d="M351 273.1 L367.8 272.4 L368.9 309.2 M360 222 V214 H366" fill="none" stroke="#f8f7f2" stroke-width="1.7" stroke-linejoin="round" stroke-linecap="round"/>
<path d="M374.4 353.2 V340.3 H403.3" fill="none" stroke="#f8f7f2" stroke-width="1.7" stroke-linejoin="round" stroke-linecap="round"/>
<path d="M409.7 328.3 L451.5 325.9 V306.6" fill="none" stroke="#f8f7f2" stroke-width="1.7" stroke-linejoin="round" stroke-linecap="round"/>
<path d="M459.8 305.8 V354 L456 372 L455 390" fill="none" stroke="#f8f7f2" stroke-width="1.7" stroke-linejoin="round" stroke-linecap="round"/>
<path d="M412 341.1 H460.3 M434.6 353.2 H460.3 M421 341.1 V359.6 H428.2 V341.1 M429.8 341.1 V391 M434.6 341.1 V391" fill="none" stroke="#f8f7f2" stroke-width="1.7" stroke-linejoin="round" stroke-linecap="round"/>
<path d="M488.4 303 V318.7 M479.9 318.7 Q468.3 318.7 468.3 330 V369 Q468.3 380.5 479.9 380.5 Q491.6 380.5 491.6 369 V330 Q491.6 318.7 479.9 318.7 Z M475.6 380.5 V424" fill="none" stroke="#f8f7f2" stroke-width="1.7" stroke-linejoin="round" stroke-linecap="round"/>
<path d="M497.2 305 L498 309.8 L514.9 310.7 L515.7 378 L529.3 378" fill="none" stroke="#f8f7f2" stroke-width="1.7" stroke-linejoin="round" stroke-linecap="round"/>
<path d="M534 341.1 H543" fill="none" stroke="#f8f7f2" stroke-width="1.7" stroke-linejoin="round" stroke-linecap="round"/>
<path d="M422.6 412 Q422.6 406.2 428.6 406.2 H460.7 Q466.7 406.2 466.7 412 Q466.7 418.2 460.7 418.2 H428.6 Q422.6 418.2 422.6 412 Z" fill="none" stroke="#f8f7f2" stroke-width="1.7" stroke-linejoin="round" stroke-linecap="round"/>
<path d="M511 248.5 L493 251 Q488 252 488.5 257 Q489 263 494 262.5 L513 260" fill="none" stroke="#f8f7f2" stroke-width="1.7" stroke-linejoin="round" stroke-linecap="round"/>
<path d="M456 240 L470 232 L486 238 L490 252 L478 262 L464 258 Z M490 252 L502 250 M486 238 L496 228 M478 262 L474 282 L462 296 L450 300 L420 300 M474 282 L486 290 L498 302" fill="none" stroke="#dbd9d3" stroke-width="1.3"/>
<path d="M0 113.4 L298 110.8" fill="none" stroke="#ebe2cd" stroke-width="7" stroke-linejoin="round" stroke-linecap="round"/>
<path d="M19 113 L20.6 212 L22.4 424" fill="none" stroke="#ebe2cd" stroke-width="7" stroke-linejoin="round" stroke-linecap="round"/>
<path d="M110.2 0 L112 211 L114 424" fill="none" stroke="#ebe2cd" stroke-width="7" stroke-linejoin="round" stroke-linecap="round"/>
<path d="M199.6 0 L201 211 L203.6 424" fill="none" stroke="#ebe2cd" stroke-width="7" stroke-linejoin="round" stroke-linecap="round"/>
<path d="M225 42.2 L261 40.9 L293 47.5" fill="none" stroke="#ebe2cd" stroke-width="7" stroke-linejoin="round" stroke-linecap="round"/>
<path d="M359.3 0 L359.3 15.8 Q360 26 361.4 34.3 L365.1 55.4 L366.1 87 L367.2 118.6 L369.8 137.1 L373.8 158.2 L376.2 205 L379.7 251.6 L394.2 291.1 L403.5 309.6 L406.8 322 L408.6 424" fill="none" stroke="#ebe2cd" stroke-width="7" stroke-linejoin="round" stroke-linecap="round"/>
<path d="M0 319.6 L308.5 317 L327 314.3 L403.5 307.5 L516.9 299" fill="none" stroke="#ebe2cd" stroke-width="7" stroke-linejoin="round" stroke-linecap="round"/>
<path d="M511.6 224.3 L508.6 212.3 Q507 205.5 501 205.4 L494 205.8 Q489 206.4 488.8 212 L488.8 221 Q489 226.4 494 226.7 L505.6 227.2 Q510 227 511.6 224.3 L517.1 254.1 L523.5 290 L527.5 313.8 L530.4 343.9 L532.4 424" fill="none" stroke="#ebe2cd" stroke-width="7" stroke-linejoin="round" stroke-linecap="round"/>
<path d="M592.8 0 L612 65.9 L625.4 113.4 L634.2 168.8 L639.5 211 L643.5 251.6 L647.4 317.5 L649.3 424" fill="none" stroke="#ebe2cd" stroke-width="7" stroke-linejoin="round" stroke-linecap="round"/>
<path d="M605 42.8 L654 29.8" fill="none" stroke="#ebe2cd" stroke-width="7" stroke-linejoin="round" stroke-linecap="round"/>
<path d="M627.6 113.4 L654 105.5" fill="none" stroke="#ebe2cd" stroke-width="7" stroke-linejoin="round" stroke-linecap="round"/>
<path d="M635.5 170.1 L654 167.5" fill="none" stroke="#ebe2cd" stroke-width="7" stroke-linejoin="round" stroke-linecap="round"/>
<path d="M641 238.4 L654 237.4" fill="none" stroke="#ebe2cd" stroke-width="7" stroke-linejoin="round" stroke-linecap="round"/>
<path d="M0 236.6 L312 234.2" fill="none" stroke="#f0d896" stroke-width="13.6"/>
<path d="M0 400.5 L320 400.3 L653.5 393" fill="none" stroke="#f0d896" stroke-width="13.6"/>
<path d="M0 113.4 L298 110.8" fill="none" stroke="#fff" stroke-width="5.4" stroke-linejoin="round" stroke-linecap="round"/>
<path d="M19 113 L20.6 212 L22.4 424" fill="none" stroke="#fff" stroke-width="5.4" stroke-linejoin="round" stroke-linecap="round"/>
<path d="M110.2 0 L112 211 L114 424" fill="none" stroke="#fff" stroke-width="5.4" stroke-linejoin="round" stroke-linecap="round"/>
<path d="M199.6 0 L201 211 L203.6 424" fill="none" stroke="#fff" stroke-width="5.4" stroke-linejoin="round" stroke-linecap="round"/>
<path d="M225 42.2 L261 40.9 L293 47.5" fill="none" stroke="#fff" stroke-width="5.4" stroke-linejoin="round" stroke-linecap="round"/>
<path d="M359.3 0 L359.3 15.8 Q360 26 361.4 34.3 L365.1 55.4 L366.1 87 L367.2 118.6 L369.8 137.1 L373.8 158.2 L376.2 205 L379.7 251.6 L394.2 291.1 L403.5 309.6 L406.8 322 L408.6 424" fill="none" stroke="#fff" stroke-width="5.4" stroke-linejoin="round" stroke-linecap="round"/>
<path d="M0 319.6 L308.5 317 L327 314.3 L403.5 307.5 L516.9 299" fill="none" stroke="#fff" stroke-width="5.4" stroke-linejoin="round" stroke-linecap="round"/>
<path d="M511.6 224.3 L508.6 212.3 Q507 205.5 501 205.4 L494 205.8 Q489 206.4 488.8 212 L488.8 221 Q489 226.4 494 226.7 L505.6 227.2 Q510 227 511.6 224.3 L517.1 254.1 L523.5 290 L527.5 313.8 L530.4 343.9 L532.4 424" fill="none" stroke="#fff" stroke-width="5.4" stroke-linejoin="round" stroke-linecap="round"/>
<path d="M592.8 0 L612 65.9 L625.4 113.4 L634.2 168.8 L639.5 211 L643.5 251.6 L647.4 317.5 L649.3 424" fill="none" stroke="#fff" stroke-width="5.4" stroke-linejoin="round" stroke-linecap="round"/>
<path d="M605 42.8 L654 29.8" fill="none" stroke="#fff" stroke-width="5.4" stroke-linejoin="round" stroke-linecap="round"/>
<path d="M627.6 113.4 L654 105.5" fill="none" stroke="#fff" stroke-width="5.4" stroke-linejoin="round" stroke-linecap="round"/>
<path d="M635.5 170.1 L654 167.5" fill="none" stroke="#fff" stroke-width="5.4" stroke-linejoin="round" stroke-linecap="round"/>
<path d="M641 238.4 L654 237.4" fill="none" stroke="#fff" stroke-width="5.4" stroke-linejoin="round" stroke-linecap="round"/>
<path d="M0 236.6 L312 234.2" fill="none" stroke="#fefbe6" stroke-width="11.4"/>
<path d="M0 400.5 L320 400.3 L653.5 393" fill="none" stroke="#fefbe6" stroke-width="11.4"/>
<path d="M286.4 0 L300.6 0 L319.1 212 L323.8 266 Q325.8 280 329.2 291 L338 383.5 L341 424 L320.4 424 L318.4 383.5 L310.8 291 L310.6 280 L305 212 Z" fill="#efc96c"/>
<path d="M287.4 0 L299.6 0 L318.1 212 L322.8 266 Q324.8 280 328.2 291 L337 383.5 L340 424 L321.4 424 L319.4 383.5 L311.8 291 L311.6 280 L306 212 Z" fill="#fae593"/>
<rect x="305" y="268.9" width="25.8" height="16.2" rx="4" fill="#fff" stroke="#8c8c8c" stroke-width="1.4"/>
<text class="ml" x="318" y="281.6" font-size="10.5" font-weight="700" fill="#333" text-anchor="middle">31</text>
<text class="ml" x="-0.5" y="42.2" font-size="14.8" font-weight="400" text-anchor="start" textLength="53.5" lengthAdjust="spacingAndGlyphs" fill="#73927e">rial Park</text>
<text class="ml" x="-0.5" y="42.2" font-size="14.8" textLength="53.5" lengthAdjust="spacingAndGlyphs" fill="none" stroke="#73927e" stroke-width=".3">rial Park</text>
<text class="ml" x="72.2" y="112.2" font-size="12.4" font-weight="400" text-anchor="middle" dy=".355em" textLength="60" lengthAdjust="spacingAndGlyphs" transform="rotate(-0.5 72.2 112.2)" fill="none" stroke="#f6f5f1" stroke-width="2.2" stroke-linejoin="round" opacity=".8">Illinois Ave</text><text class="ml" x="72.2" y="112.2" font-size="12.4" font-weight="400" text-anchor="middle" dy=".355em" textLength="60" lengthAdjust="spacingAndGlyphs" transform="rotate(-0.5 72.2 112.2)" fill="#6b6b6b">Illinois Ave</text>
<text class="ml" x="108.8" y="10.3" font-size="12.2" font-weight="400" text-anchor="middle" dy=".355em" textLength="77" lengthAdjust="spacingAndGlyphs" transform="rotate(-90 108.8 10.3)" fill="none" stroke="#f6f5f1" stroke-width="2.2" stroke-linejoin="round" opacity=".8">N Jefferson St</text><text class="ml" x="108.8" y="10.3" font-size="12.2" font-weight="400" text-anchor="middle" dy=".355em" textLength="77" lengthAdjust="spacingAndGlyphs" transform="rotate(-90 108.8 10.3)" fill="#6b6b6b">N Jefferson St</text>
<text class="ml" x="198.4" y="37.3" font-size="12.2" font-weight="400" text-anchor="middle" dy=".355em" textLength="70.4" lengthAdjust="spacingAndGlyphs" transform="rotate(-90 198.4 37.3)" fill="none" stroke="#f6f5f1" stroke-width="2.2" stroke-linejoin="round" opacity=".8">N Lincoln St</text><text class="ml" x="198.4" y="37.3" font-size="12.2" font-weight="400" text-anchor="middle" dy=".355em" textLength="70.4" lengthAdjust="spacingAndGlyphs" transform="rotate(-90 198.4 37.3)" fill="#6b6b6b">N Lincoln St</text>
<text class="ml" x="166.6" y="233.9" font-size="15.6" font-weight="400" text-anchor="middle" dy=".355em" textLength="61.5" lengthAdjust="spacingAndGlyphs" transform="rotate(-0.4 166.6 233.9)" fill="none" stroke="#f6f5f1" stroke-width="2.2" stroke-linejoin="round" opacity=".8">McKee St</text><text class="ml" x="166.6" y="233.9" font-size="15.6" font-weight="400" text-anchor="middle" dy=".355em" textLength="61.5" lengthAdjust="spacingAndGlyphs" transform="rotate(-0.4 166.6 233.9)" fill="#8a8a8a">McKee St</text>
<text class="ml" x="158.2" y="317.4" font-size="12.6" font-weight="400" text-anchor="middle" dy=".355em" textLength="60.7" lengthAdjust="spacingAndGlyphs" transform="rotate(-0.5 158.2 317.4)" fill="none" stroke="#f6f5f1" stroke-width="2.2" stroke-linejoin="round" opacity=".8">Houston St</text><text class="ml" x="158.2" y="317.4" font-size="12.6" font-weight="400" text-anchor="middle" dy=".355em" textLength="60.7" lengthAdjust="spacingAndGlyphs" transform="rotate(-0.5 158.2 317.4)" fill="#6b6b6b">Houston St</text>
<text class="ml" x="20.1" y="278.3" font-size="12.2" font-weight="400" text-anchor="middle" dy=".355em" textLength="70.4" lengthAdjust="spacingAndGlyphs" transform="rotate(-90 20.1 278.3)" fill="none" stroke="#f6f5f1" stroke-width="2.2" stroke-linejoin="round" opacity=".8">N Jackson St</text><text class="ml" x="20.1" y="278.3" font-size="12.2" font-weight="400" text-anchor="middle" dy=".355em" textLength="70.4" lengthAdjust="spacingAndGlyphs" transform="rotate(-90 20.1 278.3)" fill="#6b6b6b">N Jackson St</text>
<text class="ml" x="111.4" y="277" font-size="12.2" font-weight="400" text-anchor="middle" dy=".355em" textLength="77.2" lengthAdjust="spacingAndGlyphs" transform="rotate(-90 111.4 277)" fill="none" stroke="#f6f5f1" stroke-width="2.2" stroke-linejoin="round" opacity=".8">N Jefferson St</text><text class="ml" x="111.4" y="277" font-size="12.2" font-weight="400" text-anchor="middle" dy=".355em" textLength="77.2" lengthAdjust="spacingAndGlyphs" transform="rotate(-90 111.4 277)" fill="#6b6b6b">N Jefferson St</text>
<text class="ml" x="201.7" y="287.8" font-size="12.2" font-weight="400" text-anchor="middle" dy=".355em" textLength="67.2" lengthAdjust="spacingAndGlyphs" transform="rotate(-90 201.7 287.8)" fill="none" stroke="#f6f5f1" stroke-width="2.2" stroke-linejoin="round" opacity=".8">N Lincoln St</text><text class="ml" x="201.7" y="287.8" font-size="12.2" font-weight="400" text-anchor="middle" dy=".355em" textLength="67.2" lengthAdjust="spacingAndGlyphs" transform="rotate(-90 201.7 287.8)" fill="#6b6b6b">N Lincoln St</text>
<text class="ml" x="45.4" y="398.9" font-size="15.2" font-weight="400" text-anchor="middle" dy=".355em" textLength="81" lengthAdjust="spacingAndGlyphs" fill="none" stroke="#f6f5f1" stroke-width="2.2" stroke-linejoin="round" opacity=".8">W Wilson St</text><text class="ml" x="45.4" y="398.9" font-size="15.2" font-weight="400" text-anchor="middle" dy=".355em" textLength="81" lengthAdjust="spacingAndGlyphs" fill="#8a8a8a">W Wilson St</text>
<text class="ml" x="312.2" y="217" font-size="15.4" font-weight="400" text-anchor="middle" dy=".355em" textLength="103" lengthAdjust="spacingAndGlyphs" transform="rotate(85 312.2 217)" fill="#707070">N Batavia Ave</text>
<text class="ml" x="365.2" y="88.3" font-size="12.2" font-weight="400" text-anchor="middle" dy=".355em" textLength="59" lengthAdjust="spacingAndGlyphs" transform="rotate(79.7 365.2 88.3)" fill="none" stroke="#f6f5f1" stroke-width="2.2" stroke-linejoin="round" opacity=".8">N Water St</text><text class="ml" x="365.2" y="88.3" font-size="12.2" font-weight="400" text-anchor="middle" dy=".355em" textLength="59" lengthAdjust="spacingAndGlyphs" transform="rotate(79.7 365.2 88.3)" fill="#6b6b6b">N Water St</text>
<text class="ml" x="606.5" y="45.4" font-size="12.2" font-weight="400" text-anchor="middle" dy=".355em" textLength="55.6" lengthAdjust="spacingAndGlyphs" transform="rotate(67.7 606.5 45.4)" fill="none" stroke="#f6f5f1" stroke-width="2.2" stroke-linejoin="round" opacity=".8">N River St</text><text class="ml" x="606.5" y="45.4" font-size="12.2" font-weight="400" text-anchor="middle" dy=".355em" textLength="55.6" lengthAdjust="spacingAndGlyphs" transform="rotate(67.7 606.5 45.4)" fill="#6b6b6b">N River St</text>
<text class="ml" x="398.3" y="234.8" font-size="12.2" font-weight="400" text-anchor="middle" dy=".355em" textLength="77" lengthAdjust="spacingAndGlyphs" transform="rotate(85 398.3 234.8)" fill="none" stroke="#f6f5f1" stroke-width="2.2" stroke-linejoin="round" opacity=".8">Fox River Trail</text><text class="ml" x="398.3" y="234.8" font-size="12.2" font-weight="400" text-anchor="middle" dy=".355em" textLength="77" lengthAdjust="spacingAndGlyphs" transform="rotate(85 398.3 234.8)" fill="#6b6b6b">Fox River Trail</text>
<text class="ml" x="408.5" y="355" font-size="12.2" font-weight="400" text-anchor="middle" dy=".355em" textLength="59.5" lengthAdjust="spacingAndGlyphs" transform="rotate(85.4 408.5 355)" fill="none" stroke="#f6f5f1" stroke-width="2.2" stroke-linejoin="round" opacity=".8">N Water St</text><text class="ml" x="408.5" y="355" font-size="12.2" font-weight="400" text-anchor="middle" dy=".355em" textLength="59.5" lengthAdjust="spacingAndGlyphs" transform="rotate(85.4 408.5 355)" fill="#6b6b6b">N Water St</text>
<text class="ml" x="524.1" y="301.4" font-size="12.2" font-weight="400" text-anchor="middle" dy=".355em" textLength="69" lengthAdjust="spacingAndGlyphs" transform="rotate(80.2 524.1 301.4)" fill="none" stroke="#f6f5f1" stroke-width="2.2" stroke-linejoin="round" opacity=".8">N Island Ave</text><text class="ml" x="524.1" y="301.4" font-size="12.2" font-weight="400" text-anchor="middle" dy=".355em" textLength="69" lengthAdjust="spacingAndGlyphs" transform="rotate(80.2 524.1 301.4)" fill="#6b6b6b">N Island Ave</text>
<text class="ml" x="646.4" y="280.6" font-size="12.2" font-weight="400" text-anchor="middle" dy=".355em" textLength="53" lengthAdjust="spacingAndGlyphs" transform="rotate(83.7 646.4 280.6)" fill="none" stroke="#f6f5f1" stroke-width="2.2" stroke-linejoin="round" opacity=".8">N River St</text><text class="ml" x="646.4" y="280.6" font-size="12.2" font-weight="400" text-anchor="middle" dy=".355em" textLength="53" lengthAdjust="spacingAndGlyphs" transform="rotate(83.7 646.4 280.6)" fill="#6b6b6b">N River St</text>
<path d="M13.6 388 L18 389.8 V400.6 L23.6 397.4 L20.8 396 L19.4 392.6 L28.2 396 V400.4 L17.8 406.8 L13.6 404 Z" fill="#fbfbf8" fill-opacity=".9" stroke="#7a7a7a" stroke-width=".8" stroke-linejoin="round"/>
<text class="ml" x="30.9" y="403.9" font-size="16.5" font-weight="700" fill="#fbfbf8" fill-opacity=".85" stroke="#777" stroke-width=".8" textLength="29.6" lengthAdjust="spacingAndGlyphs">bing</text>
<defs><linearGradient id="pg" x1="0" y1="0" x2="0" y2="1"><stop offset="0" stop-color="#d9801a"/><stop offset=".1" stop-color="#e29a48"/><stop offset=".17" stop-color="#ecb676"/><stop offset=".24" stop-color="#d97c14"/><stop offset=".45" stop-color="#e0903a"/><stop offset=".58" stop-color="#d87608"/><stop offset=".74" stop-color="#d87608"/><stop offset=".8" stop-color="#e9ae6c"/><stop offset=".9" stop-color="#dc8424"/><stop offset="1" stop-color="#d97a10"/></linearGradient><linearGradient id="sh" x1="0" y1="0" x2="1" y2="0"><stop offset="0" stop-color="#777" stop-opacity=".85"/><stop offset=".55" stop-color="#8e8e8e" stop-opacity=".7"/><stop offset="1" stop-color="#c8c8c8" stop-opacity=".55"/></linearGradient><filter id="bl" x="-20%" y="-20%" width="140%" height="140%"><feGaussianBlur stdDeviation=".7"/></filter></defs>
<path d="M269.4 240.4 L276 226 Q279 205 283 204.6 Q289.6 206 289.4 216 Q289 224.5 281.5 228.6 Q276 232 269.4 240.4 Z" fill="url(#sh)" filter="url(#bl)"/>
<path d="M268.6 240.8 Q265.6 229.6 259.4 222.6 A12.3 12.3 0 1 1 277 222.6 Q271.6 229.6 268.6 240.8 Z" fill="#fff" stroke="#2b3142" stroke-width="1.05" stroke-linejoin="round"/>
<circle cx="268.2" cy="214.2" r="10.5" fill="url(#pg)"/>
<rect x="452" y="387" width="195" height="5.4" fill="#4db7fb" stroke="#2a2a2a" stroke-width="1"/>
<text class="ml" x="603.4" y="378.7" font-size="11.2" font-weight="400" text-anchor="start" textLength="44.4" lengthAdjust="spacingAndGlyphs" fill="none" stroke="#f6f5f1" stroke-width="2.2" stroke-linejoin="round" opacity=".8">1000 feet</text><text class="ml" x="603.4" y="378.7" font-size="11.2" font-weight="400" text-anchor="start" textLength="44.4" lengthAdjust="spacingAndGlyphs" fill="#1c1c1c">1000 feet</text>
<text class="ml" x="431.6" y="409.9" font-size="10" font-weight="400" text-anchor="start" textLength="132.3" lengthAdjust="spacingAndGlyphs" fill="none" stroke="#f6f5f1" stroke-width="2.2" stroke-linejoin="round" opacity=".8">© 2021 Microsoft Corporation</text><text class="ml" x="431.6" y="409.9" font-size="10" font-weight="400" text-anchor="start" textLength="132.3" lengthAdjust="spacingAndGlyphs" fill="#1c1c1c">© 2021 Microsoft Corporation</text>
<text class="ml" x="575.4" y="409.9" font-size="10" font-weight="400" text-anchor="start" textLength="71.8" lengthAdjust="spacingAndGlyphs" fill="none" stroke="#f6f5f1" stroke-width="2.2" stroke-linejoin="round" opacity=".8">© 2021 TomTom</text><text class="ml" x="575.4" y="409.9" font-size="10" font-weight="400" text-anchor="start" textLength="71.8" lengthAdjust="spacingAndGlyphs" fill="#1c1c1c">© 2021 TomTom</text>
</svg>
<div class="a" id="okbtn"></div>
<span class="t" id="t0" style="left:675.20px;top:7px;font-size:12.4px;color:#b7bac4;font-weight:700;transform:scaleX(0.8752);">TimePilot Central</span>
<span class="t" id="t1" style="left:624.75px;top:38px;font-size:15.4px;color:#fff;font-weight:700;">Unprocessed Transactions</span>
<span class="t" id="t2" style="left:1423.30px;top:40px;font-size:12px;color:#000;font-weight:700;transform:scaleX(0.9521);">Process Pay Period</span>
<span class="t" id="t3" style="left:19.00px;top:82px;font-size:12.4px;color:#0c0c14;transform:scaleX(0.8932);">Account</span>
<span class="t" id="t4" style="left:19.00px;top:130px;font-size:12.4px;color:#0c0c14;transform:scaleX(0.8980);">In/Out Board</span>
<span class="t" id="t5" style="left:19.00px;top:178px;font-size:12.4px;color:#fff;font-weight:700;transform:scaleX(0.8504);">Transactions</span>
<span class="t" id="t6" style="left:19.00px;top:226px;font-size:12.4px;color:#0c0c14;transform:scaleX(0.8442);">Pay Periods</span>
<span class="t" id="t7" style="left:19.00px;top:274px;font-size:12.4px;color:#0c0c14;transform:scaleX(0.8619);">Reports</span>
<span class="t" id="t8" style="left:19.00px;top:322px;font-size:12.4px;color:#0c0c14;transform:scaleX(0.8879);">Clock Manager</span>
<span class="t" id="t9" style="left:19.00px;top:370px;font-size:12.4px;color:#0c0c14;transform:scaleX(0.8644);">Setup</span>
<span class="t" id="t10" style="left:19.00px;top:418px;font-size:12.4px;color:#0c0c14;transform:scaleX(0.9169);">Support</span>
<span class="t" id="t11" style="left:144.40px;top:75px;font-size:14px;color:#16881a;font-weight:700;transform:scaleX(0.9203);">Kennedy, John F.</span>
<span class="t" id="t12" style="left:178.20px;top:95px;font-size:12.4px;color:#000;font-weight:700;transform:scaleX(0.8755);">Kennedy, John F.</span>
<span class="t" id="t13" style="left:551.40px;top:71px;font-size:12.4px;color:#000;transform:scaleX(0.8920);">Date Range</span>
<span class="t" id="t14" style="left:572.60px;top:90px;font-size:12.4px;color:#000;transform:scaleX(0.9080);">Unprocessed To Date</span>
<span class="t" id="t15" style="left:755.80px;top:90px;font-size:12.4px;color:#6d6d6d;transform:scaleX(0.8907);">8/27/2021</span>
<span class="t" id="t16" style="left:883.60px;top:90px;font-size:12.4px;color:#6d6d6d;transform:scaleX(0.8772);">10/27/2021</span>
<span class="t" id="t17" style="left:856.90px;top:89px;font-size:12.4px;color:#000;font-weight:700;transform:scaleX(0.7850);">To:</span>
<span class="t" id="t18" style="left:150.30px;top:183px;font-size:11.4px;color:#0a0a12;transform:scaleX(0.9841);">Kennedy, John F.</span>
<span class="t" id="t19" style="left:150.30px;top:205px;font-size:11.4px;color:#0a0a12;transform:scaleX(0.9626);">Adams, John</span>
<span class="t" id="t20" style="left:150.30px;top:227px;font-size:11.4px;color:#0a0a12;transform:scaleX(0.9770);">Cleveland, Grover</span>
<span class="t" id="t21" style="left:150.30px;top:249px;font-size:11.4px;color:#0a0a12;transform:scaleX(1.0355);">Eisenhower, Dwight</span>
<span class="t" id="t22" style="left:150.30px;top:271px;font-size:11.4px;color:#0a0a12;transform:scaleX(0.9682);">Ford, Gerald R.</span>
<span class="t" id="t23" style="left:150.30px;top:293px;font-size:11.4px;color:#0a0a12;transform:scaleX(0.9475);">Buchanan, James</span>
<span class="t" id="t24" style="left:150.30px;top:315px;font-size:11.4px;color:#0a0a12;transform:scaleX(0.9795);">Jefferson, Thomas</span>
<span class="t" id="t25" style="left:150.30px;top:337px;font-size:11.4px;color:#0a0a12;transform:scaleX(0.9537);">Carter, Jimmy</span>
<span class="t" id="t26" style="left:150.30px;top:359px;font-size:11.4px;color:#0a0a12;transform:scaleX(1.0066);">Lincoln, Abraham</span>
<span class="t" id="t27" style="left:150.30px;top:381px;font-size:11.4px;color:#0a0a12;transform:scaleX(0.9670);">Madison, James</span>
<span class="t" id="t28" style="left:150.30px;top:403px;font-size:11.4px;color:#0a0a12;transform:scaleX(0.9745);">Monroe, James</span>
<span class="t" id="t29" style="left:150.30px;top:425px;font-size:11.4px;color:#0a0a12;transform:scaleX(0.9906);">Nixon, Richard</span>
<span class="t" id="t30" style="left:150.30px;top:447px;font-size:11.4px;color:#0a0a12;transform:scaleX(0.9527);">Obama, Barack</span>
<span class="t" id="t31" style="left:150.30px;top:469px;font-size:11.4px;color:#0a0a12;transform:scaleX(0.9235);">Polk, James</span>
<span class="t" id="t32" style="left:150.30px;top:491px;font-size:11.4px;color:#0a0a12;">Roosevelt, Franklin</span>
<span class="t" id="t33" style="left:150.30px;top:513px;font-size:11.4px;color:#0a0a12;transform:scaleX(0.9728);">Roosevelt, Ted</span>
<span class="t" id="t34" style="left:150.30px;top:535px;font-size:11.4px;color:#0a0a12;transform:scaleX(1.0068);">Harding, Warren G.</span>
<span class="t" id="t35" style="left:150.30px;top:557px;font-size:11.4px;color:#0a0a12;transform:scaleX(1.0321);">Washington, George</span>
<span class="t" id="t36" style="left:150.30px;top:579px;font-size:11.4px;color:#0a0a12;transform:scaleX(1.0249);">Taft, William Howard</span>
<span class="t" id="t37" style="left:150.30px;top:601px;font-size:11.4px;color:#0a0a12;font-style:italic;transform:scaleX(0.8661);">Adams, JQ</span>
<span class="t" id="t38" style="left:160.25px;top:157px;font-size:12.4px;color:#dadada;transform:scaleX(0.9488);">Employee Name</span>
<span class="t" id="t39" style="left:307.40px;top:128px;font-size:12.4px;color:#000;font-weight:700;transform:scaleX(0.8624);">List</span>
<span class="t" id="t40" style="left:382.40px;top:129px;font-size:12.4px;color:#0a0a1e;transform:scaleX(0.8373);">Paired</span>
<span class="t" id="t41" style="left:457.20px;top:129px;font-size:12.4px;color:#0a0a1e;transform:scaleX(0.8708);">Calendar</span>
<span class="t" id="t42" style="left:532.30px;top:129px;font-size:12.4px;color:#0a0a1e;transform:scaleX(0.8991);">List All</span>
<span class="t" id="t43" style="left:328.50px;top:186px;font-size:12.4px;color:#000;transform:scaleX(0.9028);">IN</span>
<span class="t" id="t44" style="left:427.80px;top:186px;font-size:12.4px;color:#000;transform:scaleX(0.8710);">Mon</span>
<span class="t" id="t45" style="left:1319.30px;top:186px;font-size:12.4px;color:#000;transform:scaleX(0.7939);">System</span>
<span class="t" id="t46" style="left:1455.00px;top:186px;font-size:12.4px;color:#000;transform:scaleX(0.8619);">Main Location</span>
<span class="t" id="t47" style="left:327.60px;top:208px;font-size:12.4px;color:#000;transform:scaleX(0.9367);">OUT</span>
<span class="t" id="t48" style="left:427.80px;top:208px;font-size:12.4px;color:#000;transform:scaleX(0.8710);">Mon</span>
<span class="t" id="t49" style="left:462.60px;top:208px;font-size:12.4px;color:#000;transform:scaleX(0.8921);">O</span>
<span class="t" id="t50" style="left:1319.30px;top:208px;font-size:12.4px;color:#000;transform:scaleX(0.7939);">System</span>
<span class="t" id="t51" style="left:1455.00px;top:208px;font-size:12.4px;color:#000;transform:scaleX(0.8619);">Main Location</span>
<span class="t" id="t52" style="left:328.50px;top:230px;font-size:12.4px;color:#000;transform:scaleX(0.9028);">IN</span>
<span class="t" id="t53" style="left:427.80px;top:230px;font-size:12.4px;color:#000;transform:scaleX(0.9088);">Tue</span>
<span class="t" id="t54" style="left:462.60px;top:230px;font-size:12.4px;color:#000;transform:scaleX(0.8921);">O</span>
<span class="t" id="t55" style="left:1319.30px;top:230px;font-size:12.4px;color:#000;transform:scaleX(0.7939);">System</span>
<span class="t" id="t56" style="left:1455.00px;top:230px;font-size:12.4px;color:#000;transform:scaleX(0.8619);">Main Location</span>
<span class="t" id="t57" style="left:327.60px;top:252px;font-size:12.4px;color:#000;transform:scaleX(0.9367);">OUT</span>
<span class="t" id="t58" style="left:427.80px;top:252px;font-size:12.4px;color:#000;transform:scaleX(0.9088);">Tue</span>
<span class="t" id="t59" style="left:462.60px;top:252px;font-size:12.4px;color:#000;transform:scaleX(0.8921);">O</span>
<span class="t" id="t60" style="left:1319.30px;top:252px;font-size:12.4px;color:#000;transform:scaleX(0.7939);">System</span>
<span class="t" id="t61" style="left:1455.00px;top:252px;font-size:12.4px;color:#000;transform:scaleX(0.8619);">Main Location</span>
<span class="t" id="t62" style="left:328.50px;top:274px;font-size:12.4px;color:#000;transform:scaleX(0.9028);">IN</span>
<span class="t" id="t63" style="left:427.80px;top:274px;font-size:12.4px;color:#000;transform:scaleX(0.8905);">Wed</span>
<span class="t" id="t64" style="left:462.60px;top:274px;font-size:12.4px;color:#000;transform:scaleX(0.8921);">O</span>
<span class="t" id="t65" style="left:1319.30px;top:274px;font-size:12.4px;color:#000;transform:scaleX(0.7939);">System</span>
<span class="t" id="t66" style="left:1455.00px;top:274px;font-size:12.4px;color:#000;transform:scaleX(0.8619);">Main Location</span>
<span class="t" id="t67" style="left:327.60px;top:296px;font-size:12.4px;color:#000;transform:scaleX(0.9367);">OUT</span>
<span class="t" id="t68" style="left:427.80px;top:296px;font-size:12.4px;color:#000;transform:scaleX(0.8905);">Wed</span>
<span class="t" id="t69" style="left:462.60px;top:296px;font-size:12.4px;color:#000;transform:scaleX(0.8921);">O</span>
<span class="t" id="t70" style="left:1319.30px;top:296px;font-size:12.4px;color:#000;transform:scaleX(0.7939);">System</span>
<span class="t" id="t71" style="left:1455.00px;top:296px;font-size:12.4px;color:#000;transform:scaleX(0.8619);">Main Location</span>
<span class="t" id="t72" style="left:328.50px;top:318px;font-size:12.4px;color:#000;transform:scaleX(0.9028);">IN</span>
<span class="t" id="t73" style="left:427.80px;top:318px;font-size:12.4px;color:#000;transform:scaleX(0.9129);">Thu</span>
<span class="t" id="t74" style="left:462.60px;top:318px;font-size:12.4px;color:#000;transform:scaleX(0.8921);">O</span>
<span class="t" id="t75" style="left:1319.30px;top:318px;font-size:12.4px;color:#000;transform:scaleX(0.7939);">System</span>
<span class="t" id="t76" style="left:1455.00px;top:318px;font-size:12.4px;color:#000;transform:scaleX(0.8619);">Main Location</span>
<span class="t" id="t77" style="left:327.60px;top:338px;font-size:12.4px;color:#000;transform:scaleX(0.9367);">OUT</span>
<span class="t" id="t78" style="left:427.80px;top:338px;font-size:12.4px;color:#000;transform:scaleX(0.9129);">Thu</span>
<span class="t" id="t79" style="left:462.60px;top:338px;font-size:12.4px;color:#000;transform:scaleX(0.8921);">O</span>
<span class="t" id="t80" style="left:1319.30px;top:338px;font-size:12.4px;color:#000;transform:scaleX(0.7939);">System</span>
<span class="t" id="t81" style="left:1455.00px;top:338px;font-size:12.4px;color:#000;transform:scaleX(0.8619);">Main Location</span>
<span class="t" id="t82" style="left:328.50px;top:362px;font-size:12.4px;color:#000;transform:scaleX(0.9028);">IN</span>
<span class="t" id="t83" style="left:427.80px;top:362px;font-size:12.4px;color:#000;transform:scaleX(0.8905);">Wed</span>
<span class="t" id="t84" style="left:462.60px;top:362px;font-size:12.4px;color:#000;transform:scaleX(0.8921);">O</span>
<span class="t" id="t85" style="left:1319.30px;top:362px;font-size:12.4px;color:#000;transform:scaleX(0.8655);">Kennedy, John F. ...</span>
<span class="t" id="t86" style="left:1455.00px;top:362px;font-size:12.4px;color:#000;transform:scaleX(0.8619);">Main Location</span>
<span class="t" id="t87" style="left:462.60px;top:186px;font-size:12.4px;color:#000;transform:scaleX(0.9119);">Oct 4</span>
<span class="t" id="t88" style="left:548.00px;top:186px;font-size:12.4px;color:#000;transform:scaleX(0.8797);">6:30 AM</span>
<span class="t" id="t89" style="left:635.86px;top:186px;font-size:12.4px;color:#000;">-</span>
<span class="t" id="t90" style="left:693.36px;top:186px;font-size:12.4px;color:#000;">-</span>
<span class="t" id="t91" style="left:747.86px;top:186px;font-size:12.4px;color:#000;">-</span>
<span class="t" id="t92" style="left:804.86px;top:186px;font-size:12.4px;color:#000;">-</span>
<span class="t" id="t93" style="left:856.86px;top:186px;font-size:12.4px;color:#000;">-</span>
<span class="t" id="t94" style="left:920.86px;top:186px;font-size:12.4px;color:#000;">-</span>
<span class="t" id="t95" style="left:955.86px;top:186px;font-size:12.4px;color:#000;">-</span>
<span class="t" id="t96" style="left:1006.86px;top:186px;font-size:12.4px;color:#000;">-</span>
<span class="t" id="t97" style="left:1057.86px;top:186px;font-size:12.4px;color:#000;">-</span>
<span class="t" id="t98" style="left:1065.20px;top:186px;font-size:12.4px;color:#000;">-</span>
<span class="t" id="t99" style="left:351.00px;top:160px;font-size:12.4px;color:#dadada;transform:scaleX(0.8728);">Trans Type</span>
<span class="t" id="t100" style="left:434.60px;top:160px;font-size:12.4px;color:#dadada;transform:scaleX(0.8527);">Day</span>
<span class="t" id="t101" style="left:469.40px;top:160px;font-size:12.4px;color:#dadada;transform:scaleX(0.9339);">Date w/R</span>
<span class="t" id="t102" style="left:532.70px;top:160px;font-size:12.4px;color:#dadada;transform:scaleX(0.9545);">Time w/R</span>
<span class="t" id="t103" style="left:597.30px;top:160px;font-size:12.4px;color:#dadada;transform:scaleX(0.9779);">+ Time</span>
<span class="t" id="t104" style="left:649.10px;top:160px;font-size:12.4px;color:#dadada;transform:scaleX(0.8817);">Trans Ttl</span>
<span class="t" id="t105" style="left:707.40px;top:160px;font-size:12.4px;color:#dadada;transform:scaleX(0.9319);">DailyTtl</span>
<span class="t" id="t106" style="left:760.70px;top:160px;font-size:12.4px;color:#dadada;transform:scaleX(0.9332);">WeekTtl</span>
<span class="t" id="t107" style="left:818.00px;top:160px;font-size:12.4px;color:#dadada;transform:scaleX(0.9265);">Run Ttl</span>
<span class="t" id="t108" style="left:869.90px;top:160px;font-size:12.4px;color:#dadada;transform:scaleX(0.9259);">Reg Time</span>
<span class="t" id="t109" style="left:934.10px;top:160px;font-size:12.4px;color:#dadada;transform:scaleX(0.7922);">OT1</span>
<span class="t" id="t110" style="left:969.20px;top:160px;font-size:12.4px;color:#dadada;transform:scaleX(0.9013);">Reg Ttl</span>
<span class="t" id="t111" style="left:1020.00px;top:160px;font-size:12.4px;color:#dadada;transform:scaleX(0.8833);">OT1 Ttl</span>
<span class="t" id="t112" style="left:1088.00px;top:160px;font-size:12.4px;color:#dadada;transform:scaleX(0.9320);">Late/Early</span>
<span class="t" id="t113" style="left:1171.30px;top:160px;font-size:12.4px;color:#dadada;transform:scaleX(0.9290);">Inserted</span>
<span class="t" id="t114" style="left:1228.50px;top:160px;font-size:12.4px;color:#dadada;transform:scaleX(1.0161);">Modified</span>
<span class="t" id="t115" style="left:1335.10px;top:160px;font-size:12.4px;color:#dadada;transform:scaleX(0.9632);">Clock Name</span>
<span class="t" id="t116" style="left:1425.60px;top:160px;font-size:12.4px;color:#dadada;transform:scaleX(0.7947);">GPS</span>
<span class="t" id="t117" style="left:1481.50px;top:160px;font-size:12.4px;color:#dadada;transform:scaleX(0.9710);">Location</span>
<span class="t" id="t118" style="left:732.30px;top:204px;font-size:12.4px;color:#fff;font-weight:700;transform:scaleX(0.8494);z-index:6;">Transaction GPS Location</span>
<span class="t" id="t119" style="left:797.10px;top:619px;font-size:12.4px;color:#000;transform:scaleX(0.8377);z-index:6;">OK</span>
</body></html>
